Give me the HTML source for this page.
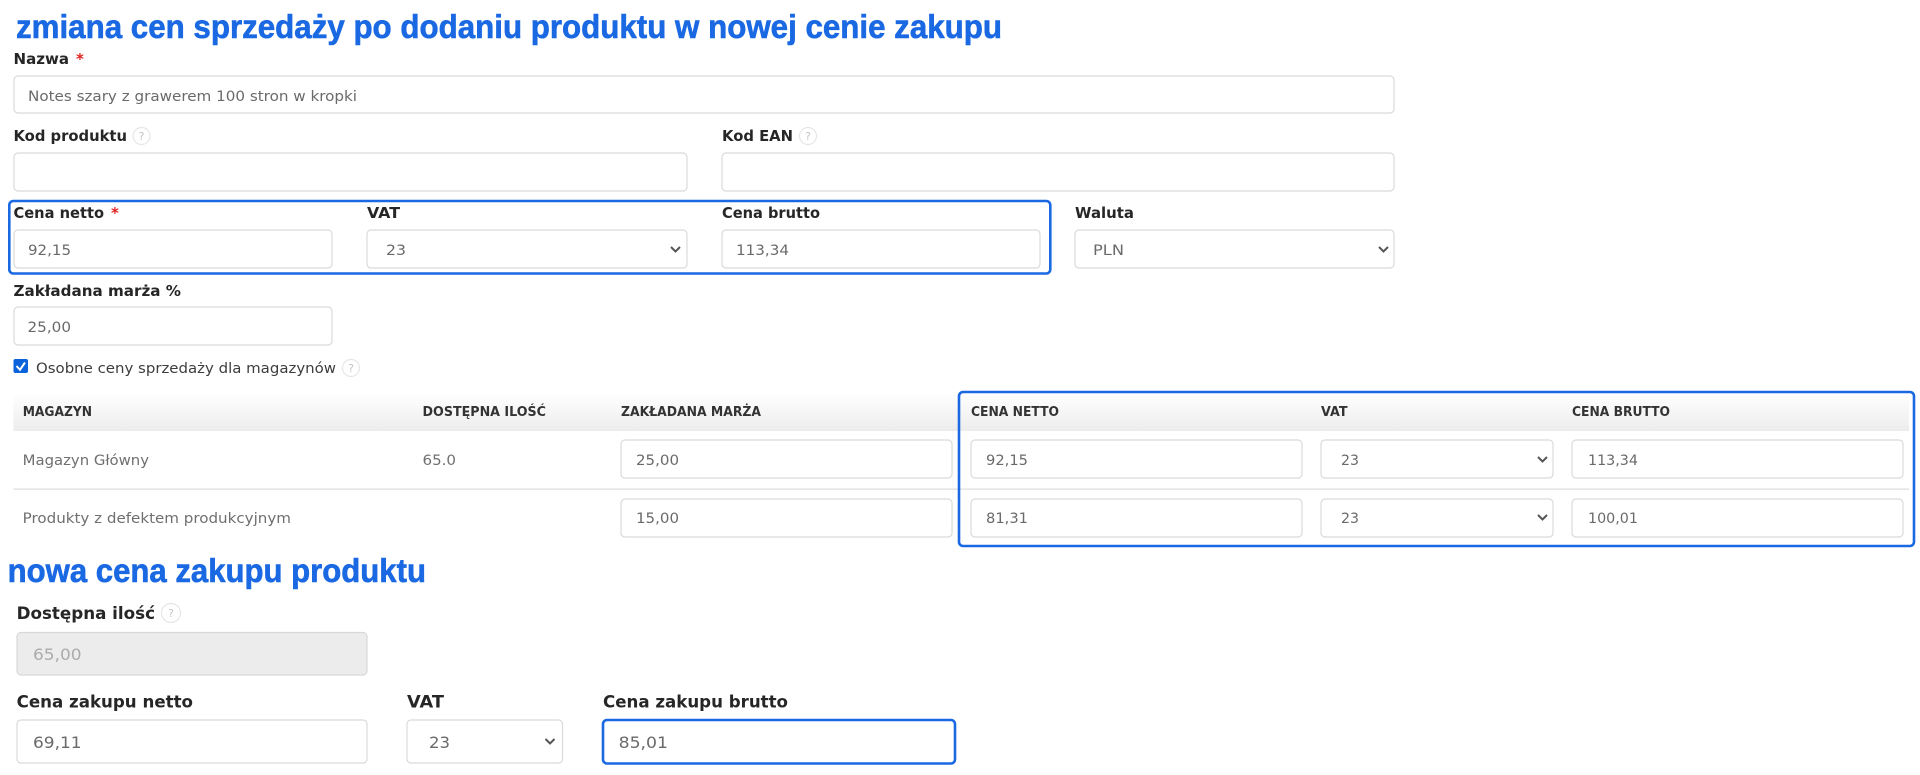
<!DOCTYPE html>
<html lang="pl">
<head>
<meta charset="utf-8">
<title>Zmiana cen sprzedaży</title>
<style>
html,body{margin:0;padding:0;background:#fff;width:1920px;height:775px;overflow:hidden}
svg{display:block;position:absolute;left:0;top:0;filter:blur(.3px)}
text{font-family:"DejaVu Sans","Liberation Sans",sans-serif}
.t{font-family:"Liberation Sans",sans-serif;font-weight:700;fill:#1a69e3;stroke:#1a69e3;stroke-width:.6;font-size:33px}
.l{font-weight:700;font-size:15px;fill:#262626}
.L{font-weight:700;font-size:16.5px;fill:#262626}
.h{font-weight:700;font-size:13px;fill:#333}
.v{font-size:14.5px;fill:#6a6a6a}
.V{font-size:16px;fill:#6a6a6a}
.d{font-size:14.5px;fill:#6f6f6f}
.s{fill:#e02020;font-weight:700;font-size:15px}
.b{fill:#fff;stroke:#dadada;stroke-width:1.2}
.c{fill:#fff;stroke:#e6e6e6;stroke-width:1.2}
.q{font-size:11px;fill:#c4c4c4;text-anchor:middle}
.ch{fill:none;stroke:#555;stroke-width:2}
.blue{fill:none;stroke:#1a69e3;stroke-width:2.6}
</style>
</head>
<body>
<svg width="1920" height="775" viewBox="0 0 1920 775" xmlns="http://www.w3.org/2000/svg">
<defs>
<linearGradient id="g" x1="0" y1="0" x2="0" y2="1"><stop offset="0" stop-color="#fff"/><stop offset="1" stop-color="#ececec"/></linearGradient>
</defs>

<text class="t" x="16" y="38" textLength="986" lengthAdjust="spacingAndGlyphs">zmiana cen sprzedaży po dodaniu produktu w nowej cenie zakupu</text>

<text class="l" x="13.5" y="64" textLength="55.5" lengthAdjust="spacingAndGlyphs">Nazwa</text>
<text class="s" x="76" y="64">*</text>
<rect class="b" x="14" y="76" width="1380" height="37" rx="4"/>
<text class="v" x="28" y="101" textLength="329" lengthAdjust="spacingAndGlyphs">Notes szary z grawerem 100 stron w kropki</text>

<text class="l" x="13.5" y="141" textLength="113.5" lengthAdjust="spacingAndGlyphs">Kod produktu</text>
<circle class="c" cx="141.500" cy="136" r="8.500"/><text class="q" x="141.500" y="140">?</text>
<text class="l" x="722" y="141" textLength="71" lengthAdjust="spacingAndGlyphs">Kod EAN</text>
<circle class="c" cx="808" cy="136" r="8.500"/><text class="q" x="808" y="140">?</text>
<rect class="b" x="14" y="153" width="673" height="38" rx="4"/>
<rect class="b" x="722" y="153" width="672" height="38" rx="4"/>

<text class="l" x="13.5" y="218" textLength="90.5" lengthAdjust="spacingAndGlyphs">Cena netto</text>
<text class="s" x="111" y="218">*</text>
<text class="l" x="367" y="218" textLength="33" lengthAdjust="spacingAndGlyphs">VAT</text>
<text class="l" x="722" y="218" textLength="98" lengthAdjust="spacingAndGlyphs">Cena brutto</text>
<text class="l" x="1075" y="218" textLength="59" lengthAdjust="spacingAndGlyphs">Waluta</text>
<rect class="b" x="14" y="230" width="318" height="38" rx="4"/>
<rect class="b" x="367" y="230" width="320" height="38" rx="4"/>
<rect class="b" x="722" y="230" width="318" height="38" rx="4"/>
<rect class="b" x="1075" y="230" width="319" height="38" rx="4"/>
<text class="v" x="28" y="255" textLength="43" lengthAdjust="spacingAndGlyphs">92,15</text>
<text class="v" x="386" y="255" textLength="20" lengthAdjust="spacingAndGlyphs">23</text>
<path class="ch" d="M671 247l4.500 4.500 4.500-4.500"/>
<text class="v" x="736" y="255" textLength="53" lengthAdjust="spacingAndGlyphs">113,34</text>
<text class="v" x="1093" y="255" textLength="31" lengthAdjust="spacingAndGlyphs">PLN</text>
<path class="ch" d="M1379 247l4.500 4.500 4.500-4.500"/>
<rect class="blue" x="9.300" y="201" width="1041" height="72.500" rx="4"/>

<text class="l" x="13.5" y="296" textLength="167.500" lengthAdjust="spacingAndGlyphs">Zakładana marża %</text>
<rect class="b" x="14" y="307" width="318" height="38" rx="4"/>
<text class="v" x="27.500" y="332" textLength="43.500" lengthAdjust="spacingAndGlyphs">25,00</text>

<rect x="13.500" y="359" width="14.500" height="14" rx="2" fill="#0b63dc"/>
<path d="M16.500 366l3.500 3.800 5-7.300" fill="none" stroke="#fff" stroke-width="2"/>
<text class="d" x="36" y="373" style="fill:#3d3d3d" textLength="300" lengthAdjust="spacingAndGlyphs">Osobne ceny sprzedaży dla magazynów</text>
<circle class="c" cx="351" cy="368" r="8.500"/><text class="q" x="351" y="372">?</text>

<rect x="13.500" y="393" width="1895.500" height="38" fill="url(#g)"/>
<text class="h" x="22.700" y="416" textLength="69.300" lengthAdjust="spacingAndGlyphs">MAGAZYN</text>
<text class="h" x="422.500" y="416" textLength="123.500" lengthAdjust="spacingAndGlyphs">DOSTĘPNA ILOŚĆ</text>
<text class="h" x="621" y="416" textLength="140" lengthAdjust="spacingAndGlyphs">ZAKŁADANA MARŻA</text>
<text class="h" x="971" y="416" textLength="88" lengthAdjust="spacingAndGlyphs">CENA NETTO</text>
<text class="h" x="1321" y="416" textLength="26.500" lengthAdjust="spacingAndGlyphs">VAT</text>
<text class="h" x="1572" y="416" textLength="98" lengthAdjust="spacingAndGlyphs">CENA BRUTTO</text>

<text class="d" x="22.700" y="465" textLength="126.300" lengthAdjust="spacingAndGlyphs">Magazyn Główny</text>
<text class="d" x="422.500" y="465" textLength="33.500" lengthAdjust="spacingAndGlyphs">65.0</text>
<rect class="b" x="621" y="440" width="331" height="38" rx="4"/>
<text class="v" x="636" y="465" textLength="43" lengthAdjust="spacingAndGlyphs">25,00</text>
<rect class="b" x="971" y="440" width="331" height="38" rx="4"/>
<text class="v" x="986" y="465" textLength="42" lengthAdjust="spacingAndGlyphs">92,15</text>
<rect class="b" x="1321" y="440" width="232" height="38" rx="4"/>
<text class="v" x="1341" y="465" textLength="18" lengthAdjust="spacingAndGlyphs">23</text>
<path class="ch" d="M1538 457l4.500 4.500 4.500-4.500"/>
<rect class="b" x="1572" y="440" width="331" height="38" rx="4"/>
<text class="v" x="1588" y="465" textLength="50" lengthAdjust="spacingAndGlyphs">113,34</text>

<rect x="13.500" y="488.500" width="1895.500" height="1.200" fill="#dcdcdc"/>

<text class="d" x="22.700" y="523" textLength="268.300" lengthAdjust="spacingAndGlyphs">Produkty z defektem produkcyjnym</text>
<rect class="b" x="621" y="499" width="331" height="38" rx="4"/>
<text class="v" x="636" y="523" textLength="43" lengthAdjust="spacingAndGlyphs">15,00</text>
<rect class="b" x="971" y="499" width="331" height="38" rx="4"/>
<text class="v" x="986" y="523" textLength="42" lengthAdjust="spacingAndGlyphs">81,31</text>
<rect class="b" x="1321" y="499" width="232" height="38" rx="4"/>
<text class="v" x="1341" y="523" textLength="18" lengthAdjust="spacingAndGlyphs">23</text>
<path class="ch" d="M1538 515l4.500 4.500 4.500-4.500"/>
<rect class="b" x="1572" y="499" width="331" height="38" rx="4"/>
<text class="v" x="1588" y="523" textLength="50" lengthAdjust="spacingAndGlyphs">100,01</text>

<rect class="blue" x="959" y="392" width="955" height="154" rx="4"/>

<text class="t" x="7.600" y="582" textLength="418.400" lengthAdjust="spacingAndGlyphs">nowa cena zakupu produktu</text>

<text class="L" x="16.600" y="619" textLength="138.400" lengthAdjust="spacingAndGlyphs">Dostępna ilość</text>
<circle class="c" cx="171" cy="613" r="9.500"/><text class="q" x="171" y="617">?</text>
<rect x="17" y="632.500" width="350" height="42.500" rx="4" fill="#ececec" stroke="#d8d8d8" stroke-width="1.200"/>
<text class="V" x="33" y="660" style="fill:#ababab" textLength="48.600" lengthAdjust="spacingAndGlyphs">65,00</text>

<text class="L" x="16.600" y="707.500" textLength="176.400" lengthAdjust="spacingAndGlyphs">Cena zakupu netto</text>
<text class="L" x="407" y="707.500" textLength="37" lengthAdjust="spacingAndGlyphs">VAT</text>
<text class="L" x="603" y="707.500" textLength="185" lengthAdjust="spacingAndGlyphs">Cena zakupu brutto</text>
<rect class="b" x="17" y="720" width="350" height="43" rx="4"/>
<text class="V" x="33" y="748" textLength="48.600" lengthAdjust="spacingAndGlyphs">69,11</text>
<rect class="b" x="407" y="720" width="155.500" height="43" rx="4"/>
<text class="V" x="429" y="748" textLength="21" lengthAdjust="spacingAndGlyphs">23</text>
<path class="ch" d="M545.500 739l4.500 4.500 4.500-4.500"/>
<rect x="603" y="720" width="352" height="43.500" rx="4" fill="#fff" stroke="#1a69e3" stroke-width="2.600"/>
<text class="V" x="618.600" y="748" textLength="49.400" lengthAdjust="spacingAndGlyphs">85,01</text>
</svg>
</body>
</html>
